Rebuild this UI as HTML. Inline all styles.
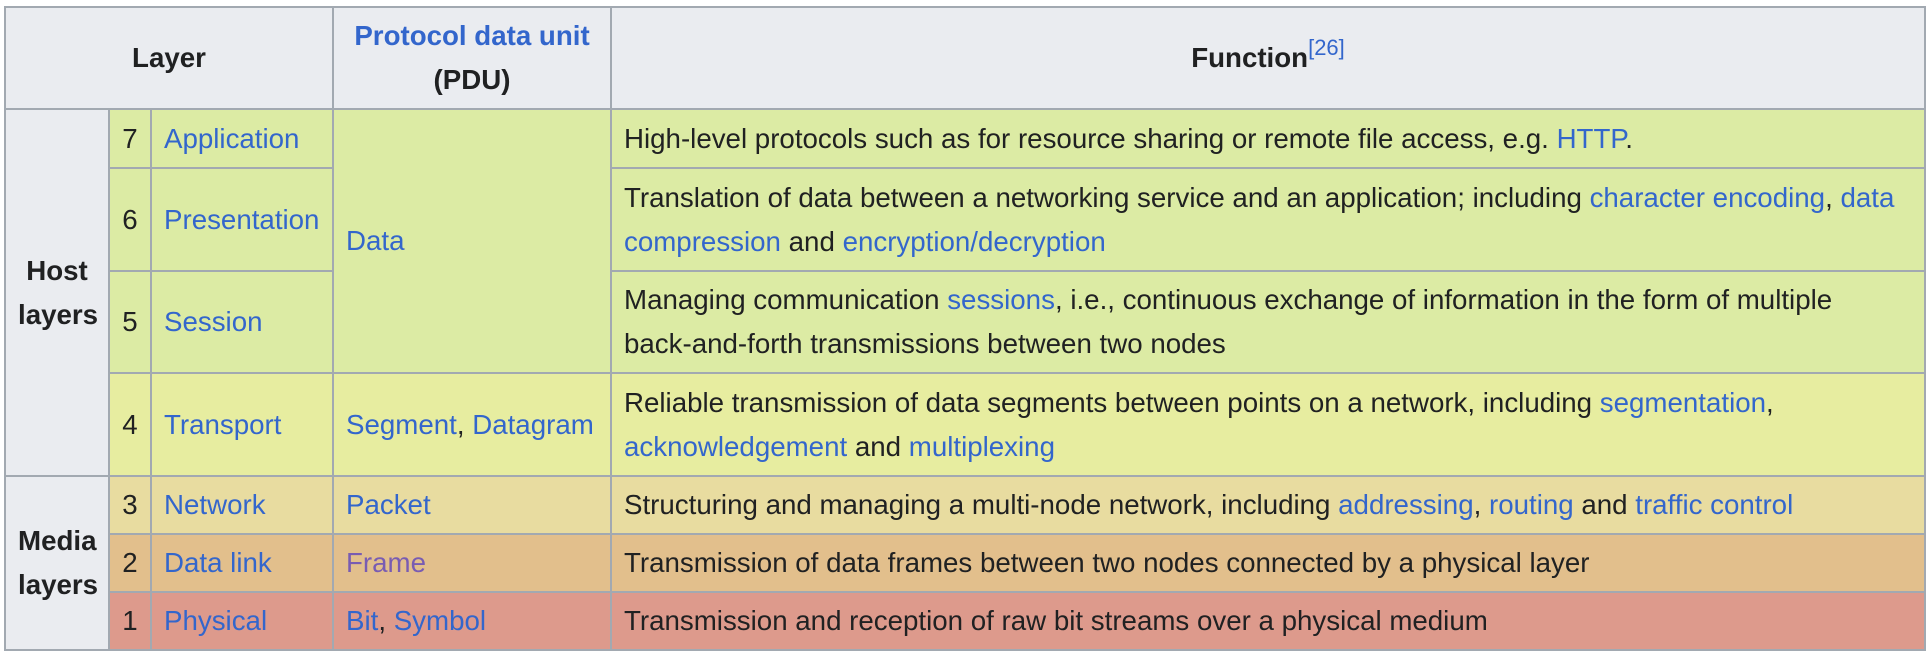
<!DOCTYPE html>
<html><head><meta charset="utf-8"><style>
html,body{margin:0;padding:0;background:#fff;width:1928px;height:653px;overflow:hidden}
table{position:absolute;left:4px;top:6px;border-collapse:collapse;table-layout:fixed;width:1920px;
font-family:"Liberation Sans",Arial,sans-serif;font-size:27.7px;line-height:44px;color:#202122}
td,th{border:2px solid #a2a9b1;padding:6px 12px;vertical-align:middle}
th{background:#eaecf0;font-weight:bold;text-align:center}
a{color:#3366cc;text-decoration:none}
a.v{color:#795cb2}
sup{font-size:22px;line-height:0;font-weight:normal;vertical-align:12px}
.n{text-align:center;padding:6px 0}
.nw{white-space:nowrap}
.g{background:#dcebA4}
.t{background:#e7eda0}
.w{background:#e8dca0}
.d{background:#e2bf8c}
.p{background:#dd9a8c}
</style></head><body>
<table>
<colgroup><col style="width:104px"><col style="width:42px"><col style="width:182px"><col style="width:278px"><col style="width:1314px"></colgroup>
<tr style="height:102px"><th colspan="3">Layer</th><th><a>Protocol data unit</a><br>(PDU)</th><th>Function<sup><a>[26]</a></sup></th></tr>
<tr style="height:59px"><th rowspan="4">Host<br>layers</th><td class="g n">7</td><td class="g"><a>Application</a></td><td class="g" rowspan="3"><a>Data</a></td><td class="g">High-level protocols such as for resource sharing or remote file access, e.g. <a>HTTP</a>.</td></tr>
<tr style="height:103px"><td class="g n">6</td><td class="g"><a>Presentation</a></td><td class="g">Translation of data between a networking service and an application; including <a>character encoding</a>, <a>data compression</a> and <a>encryption/decryption</a></td></tr>
<tr style="height:102px"><td class="g n">5</td><td class="g"><a>Session</a></td><td class="g">Managing communication <a>sessions</a>, i.e., continuous exchange of information in the form of multiple <span class="nw">back-and-forth</span> transmissions between two nodes</td></tr>
<tr style="height:103px"><td class="t n">4</td><td class="t"><a>Transport</a></td><td class="t"><a>Segment</a>, <a>Datagram</a></td><td class="t">Reliable transmission of data segments between points on a network, including <a>segmentation</a>, <a>acknowledgement</a> and <a>multiplexing</a></td></tr>
<tr style="height:58px"><th rowspan="3">Media<br>layers</th><td class="w n">3</td><td class="w"><a>Network</a></td><td class="w"><a>Packet</a></td><td class="w">Structuring and managing a multi-node network, including <a>addressing</a>, <a>routing</a> and <a>traffic control</a></td></tr>
<tr style="height:58px"><td class="d n">2</td><td class="d"><a>Data link</a></td><td class="d"><a class="v">Frame</a></td><td class="d">Transmission of data frames between two nodes connected by a physical layer</td></tr>
<tr style="height:57px"><td class="p n">1</td><td class="p"><a>Physical</a></td><td class="p"><a>Bit</a>, <a>Symbol</a></td><td class="p">Transmission and reception of raw bit streams over a physical medium</td></tr>
</table>
</body></html>
